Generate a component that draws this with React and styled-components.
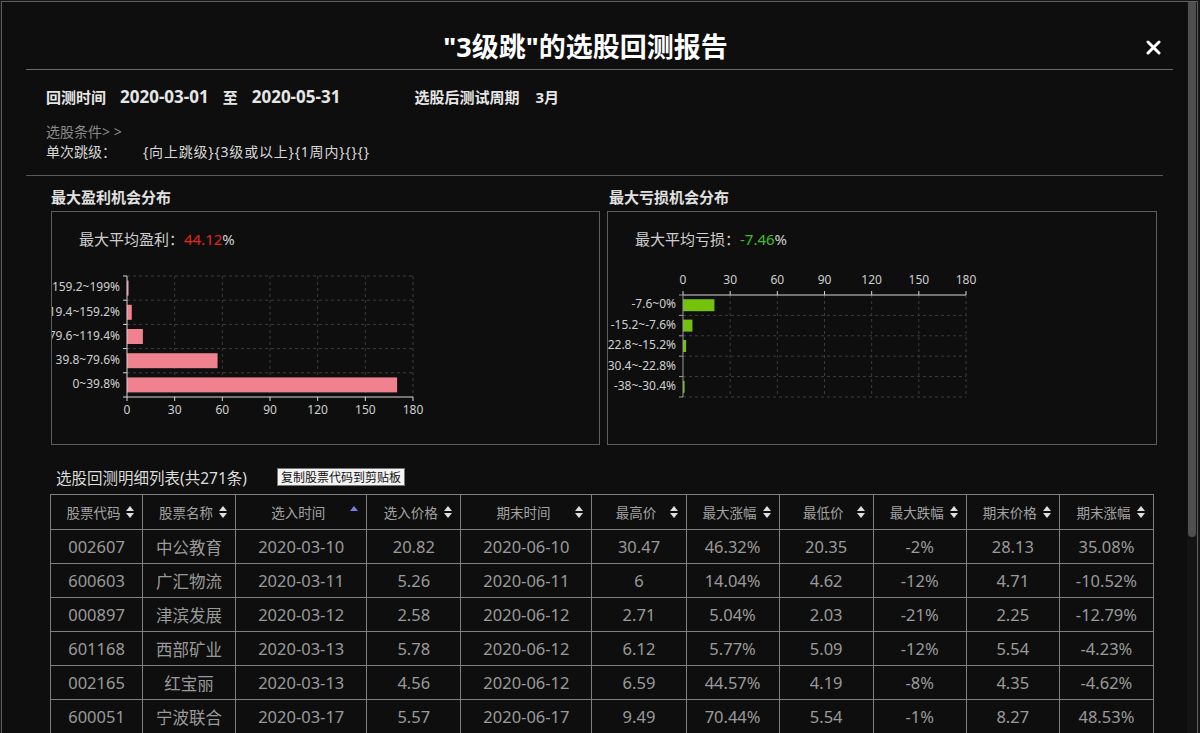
import styled, { createGlobalStyle } from "styled-components";

const GlobalStyle = createGlobalStyle`
  html, body {
    margin: 0;
    padding: 0;
    height: 100%;
    overflow: hidden;
    background: #161616;
  }
  body {
    font-family: "Noto Sans", "Noto Sans CJK SC", sans-serif;
  }
`;

const Modal = styled.div`
  display: flex;
  height: calc(100vh - 1px);
  margin: 1px 2px 0 1px;
  border: 1px solid #5f5f5f;
  border-bottom: none;
  background: #0e0e0e;
  box-sizing: border-box;
  overflow: hidden;
`;

const Content = styled.div`
  flex: 1;
  min-width: 0;
  overflow: hidden;
`;

const ScrollTrack = styled.div`
  width: 10px;
  flex-shrink: 0;
  background: #141414;
`;

const ScrollThumb = styled.div`
  height: 535px;
  margin: 0 1px;
  background: #4f4f4f;
  border-radius: 0 0 4px 4px;
`;

const Header = styled.div`
  display: flex;
  align-items: flex-start;
  height: 68px;
  box-sizing: border-box;
  padding-top: 25px;
  margin: 0 14px 0 24px;
  border-bottom: 1px solid #6a6a6a;
`;

const Title = styled.h1`
  flex: 1;
  margin: 0;
  padding-left: 12px;
  text-align: center;
  font-size: 27px;
  line-height: 40px;
  font-weight: 700;
  color: #fff;
`;

const CloseButton = styled.button`
  width: 40px;
  height: 40px;
  padding: 0;
  border: none;
  background: none;
  display: flex;
  align-items: center;
  justify-content: center;
  cursor: pointer;
`;

const Info = styled.div`
  margin: 0 24px;
  padding: 16px 0 13px 20px;
  border-bottom: 1px solid #5a5a5a;
`;

const InfoRow = styled.div`
  display: flex;
  align-items: center;
  height: 20px;
  color: #e6e6e6;
  font-weight: 700;
`;

const InfoGroup = styled.div`
  display: flex;
  align-items: center;
  gap: ${(p) => p.$gap || 14}px;
  margin-left: ${(p) => p.$offset || 0}px;
`;

const InfoLabel = styled.span`
  font-size: 15px;
`;

const InfoValue = styled.span`
  font-size: 17px;
`;

const CondLink = styled.div`
  margin-top: 16px;
  font-size: 14px;
  line-height: 20px;
  color: #8a8a8a;
`;

const CondRow = styled.div`
  display: flex;
  font-size: 14px;
  line-height: 20px;
  color: #d8d8d8;
`;

const CondLabel = styled.span`
  width: 97px;
`;

const CondValue = styled.span`
  letter-spacing: 0.8px;
`;

const ChartsGrid = styled.div`
  display: grid;
  grid-template-columns: 549px 550px;
  column-gap: 7px;
  padding: 11px 0 0 49px;
`;

const ChartTitle = styled.div`
  margin: 0 0 4px ${(p) => p.$indent || 0}px;
  font-size: 15px;
  line-height: 20px;
  font-weight: 700;
  color: #e0e0e0;
`;

const ChartBox = styled.div`
  height: 234px;
  box-sizing: border-box;
  border: 1px solid #5c5c5c;
  overflow: hidden;
`;

const Stat = styled.div`
  padding: 16px 0 0 27px;
  font-size: 15px;
  line-height: 22px;
  color: #cfcfcf;
`;

const StatNum = styled.span`
  color: ${(p) => p.$color};
`;

const ChartSvg = styled.svg`
  display: block;
  margin-top: 12px;
`;

const TableSection = styled.div`
  padding: 21px 0 0 48px;
`;

const TableHeading = styled.div`
  display: flex;
  align-items: center;
  height: 22px;
  margin-bottom: 6px;
`;

const TableTitle = styled.span`
  margin-left: 6px;
  font-size: 15.5px;
  color: #dcdcdc;
`;

const CopyButton = styled.button`
  margin-left: 30px;
  height: 18px;
  padding: 0 3px;
  border: 1px solid #777;
  border-radius: 0;
  background: #f4f4f4;
  color: #111;
  font-family: "Noto Sans CJK SC", sans-serif;
  font-size: 12px;
  line-height: 16px;
`;

const Table = styled.table`
  width: 1104px;
  table-layout: fixed;
  border-collapse: collapse;
  border: 1px solid #808080;
`;

const Th = styled.th`
  height: 34px;
  padding: 0 8px 0 10px;
  border: 1px solid #808080;
  font-size: 13.5px;
  font-weight: 400;
  color: #a3a3a3;
`;

const ThInner = styled.div`
  display: flex;
  align-items: center;
`;

const ThText = styled.span`
  flex: 1;
  text-align: center;
  white-space: nowrap;
`;

const Td = styled.td`
  height: 33px;
  padding: 0;
  border: 1px solid #808080;
  text-align: center;
  font-size: 16.5px;
  color: #9a9a9a;
`;

const columns = [
  { name: "股票代码", w: 92 },
  { name: "股票名称", w: 93 },
  { name: "选入时间", w: 131, sort: "asc" },
  { name: "选入价格", w: 94 },
  { name: "期末时间", w: 131 },
  { name: "最高价", w: 94 },
  { name: "最大涨幅", w: 93 },
  { name: "最低价", w: 94 },
  { name: "最大跌幅", w: 93 },
  { name: "期末价格", w: 93 },
  { name: "期末涨幅", w: 94 },
];

const rows = [
  ["002607", "中公教育", "2020-03-10", "20.82", "2020-06-10", "30.47", "46.32%", "20.35", "-2%", "28.13", "35.08%"],
  ["600603", "广汇物流", "2020-03-11", "5.26", "2020-06-11", "6", "14.04%", "4.62", "-12%", "4.71", "-10.52%"],
  ["000897", "津滨发展", "2020-03-12", "2.58", "2020-06-12", "2.71", "5.04%", "2.03", "-21%", "2.25", "-12.79%"],
  ["601168", "西部矿业", "2020-03-13", "5.78", "2020-06-12", "6.12", "5.77%", "5.09", "-12%", "5.54", "-4.23%"],
  ["002165", "红宝丽", "2020-03-13", "4.56", "2020-06-12", "6.59", "44.57%", "4.19", "-8%", "4.35", "-4.62%"],
  ["600051", "宁波联合", "2020-03-17", "5.57", "2020-06-17", "9.49", "70.44%", "5.54", "-1%", "8.27", "48.53%"],
];

const profitData = [
  { label: "159.2~199%", value: 1 },
  { label: "119.4~159.2%", value: 3 },
  { label: "79.6~119.4%", value: 10 },
  { label: "39.8~79.6%", value: 57 },
  { label: "0~39.8%", value: 170 },
];

const lossData = [
  { label: "-7.6~0%", value: 20 },
  { label: "-15.2~-7.6%", value: 6 },
  { label: "-22.8~-15.2%", value: 2 },
  { label: "-30.4~-22.8%", value: 0 },
  { label: "-38~-30.4%", value: 1 },
];

const ticks = [0, 30, 60, 90, 120, 150, 180];

function BarChart({ data, color, barH, x0, x1, yTop, yBot, axisTop, tickY, axisColor }) {
  const scale = (x1 - x0) / 180;
  const rowH = (yBot - yTop) / data.length;
  const axisY = axisTop ? yTop : yBot;
  const bounds = data.map((_, i) => yTop + i * rowH).concat(yBot);

  return (
    <ChartSvg width="547" height="170">
      {ticks.slice(1).map((t) => (
        <line key={"v" + t} x1={x0 + t * scale} x2={x0 + t * scale} y1={yTop} y2={yBot}
          stroke="#3c3c3c" strokeDasharray="3 3" />
      ))}
      {bounds.filter((y) => y !== axisY).map((y) => (
        <line key={"h" + y} x1={x0} x2={x1} y1={y} y2={y} stroke="#3c3c3c" strokeDasharray="3 3" />
      ))}
      {data.map((d, i) =>
        d.value > 0 ? (
          <rect key={d.label} x={x0} y={yTop + i * rowH + (rowH - barH) / 2}
            width={d.value * scale} height={barH} fill={color} />
        ) : null
      )}
      <line x1={x0} x2={x1} y1={axisY} y2={axisY} stroke="#d6d6d6" />
      {ticks.map((t) => (
        <g key={"t" + t}>
          <line x1={x0 + t * scale} x2={x0 + t * scale}
            y1={axisY} y2={axisTop ? axisY - 4 : axisY + 4} stroke="#d6d6d6" />
          <text x={x0 + t * scale} y={tickY} fill="#cfcfcf" fontSize="12"
            textAnchor="middle" dominantBaseline="middle">{t}</text>
        </g>
      ))}
      <line x1={x0} x2={x0} y1={yTop} y2={yBot} stroke={axisColor} />
      {bounds.map((y) => (
        <line key={"yt" + y} x1={x0 - 4} x2={x0} y1={y} y2={y} stroke={axisColor} />
      ))}
      {data.map((d, i) => (
        <text key={"l" + d.label} x={x0 - 7} y={yTop + i * rowH + rowH / 2} fill="#d0d0d0"
          fontSize="12" textAnchor="end" dominantBaseline="middle">{d.label}</text>
      ))}
    </ChartSvg>
  );
}

function SortIcon({ dir }) {
  return (
    <svg width="8" height="12" viewBox="0 0 8 12">
      {dir === "asc" ? (
        <polygon points="4,0 8,5 0,5" fill="#7c7ce0" />
      ) : (
        <>
          <polygon points="4,0 8,5 0,5" fill="#dedede" />
          <polygon points="0,7 8,7 4,12" fill="#dedede" />
        </>
      )}
    </svg>
  );
}

export default function App() {
  return (
    <>
      <GlobalStyle />
      <Modal>
        <Content>
          <Header>
            <Title>"3级跳"的选股回测报告</Title>
            <CloseButton aria-label="关闭">
              <svg width="15" height="15" viewBox="0 0 15 15">
                <path d="M2 2 L13 13 M13 2 L2 13" stroke="#fff" strokeWidth="3" strokeLinecap="round" />
              </svg>
            </CloseButton>
          </Header>

          <Info>
            <InfoRow>
              <InfoGroup>
                <InfoLabel>回测时间</InfoLabel>
                <InfoValue>2020-03-01</InfoValue>
                <InfoLabel>至</InfoLabel>
                <InfoValue>2020-05-31</InfoValue>
              </InfoGroup>
              <InfoGroup $offset={74} $gap={16}>
                <InfoLabel>选股后测试周期</InfoLabel>
                <InfoLabel>3月</InfoLabel>
              </InfoGroup>
            </InfoRow>
            <CondLink>选股条件&gt; &gt;</CondLink>
            <CondRow>
              <CondLabel>单次跳级：</CondLabel>
              <CondValue>{"{向上跳级}{3级或以上}{1周内}{}{}"}</CondValue>
            </CondRow>
          </Info>

          <ChartsGrid>
            <div>
              <ChartTitle>最大盈利机会分布</ChartTitle>
              <ChartBox>
                <Stat>
                  最大平均盈利：<StatNum $color="#e3261e">44.12</StatNum>%
                </Stat>
                <BarChart data={profitData} color="#f0818f" barH={15} x0={75} x1={361}
                  yTop={14} yBot={135} tickY={149} axisColor="#d6d6d6" />
              </ChartBox>
            </div>
            <div>
              <ChartTitle $indent={2}>最大亏损机会分布</ChartTitle>
              <ChartBox>
                <Stat>
                  最大平均亏损：<StatNum $color="#3fc02a">-7.46</StatNum>%
                </Stat>
                <BarChart data={lossData} color="#74c20c" barH={12} x0={75} x1={358}
                  yTop={33} yBot={135} tickY={19} axisTop axisColor="#9a9a9a" />
              </ChartBox>
            </div>
          </ChartsGrid>

          <TableSection>
            <TableHeading>
              <TableTitle>选股回测明细列表(共271条)</TableTitle>
              <CopyButton>复制股票代码到剪贴板</CopyButton>
            </TableHeading>
            <Table>
              <colgroup>
                {columns.map((c) => (
                  <col key={c.name} style={{ width: c.w }} />
                ))}
              </colgroup>
              <thead>
                <tr>
                  {columns.map((c) => (
                    <Th key={c.name}>
                      <ThInner>
                        <ThText>{c.name}</ThText>
                        <SortIcon dir={c.sort} />
                      </ThInner>
                    </Th>
                  ))}
                </tr>
              </thead>
              <tbody>
                {rows.map((r) => (
                  <tr key={r[0]}>
                    {r.map((v, i) => (
                      <Td key={i}>{v}</Td>
                    ))}
                  </tr>
                ))}
              </tbody>
            </Table>
          </TableSection>
        </Content>
        <ScrollTrack>
          <ScrollThumb />
        </ScrollTrack>
      </Modal>
    </>
  );
}
